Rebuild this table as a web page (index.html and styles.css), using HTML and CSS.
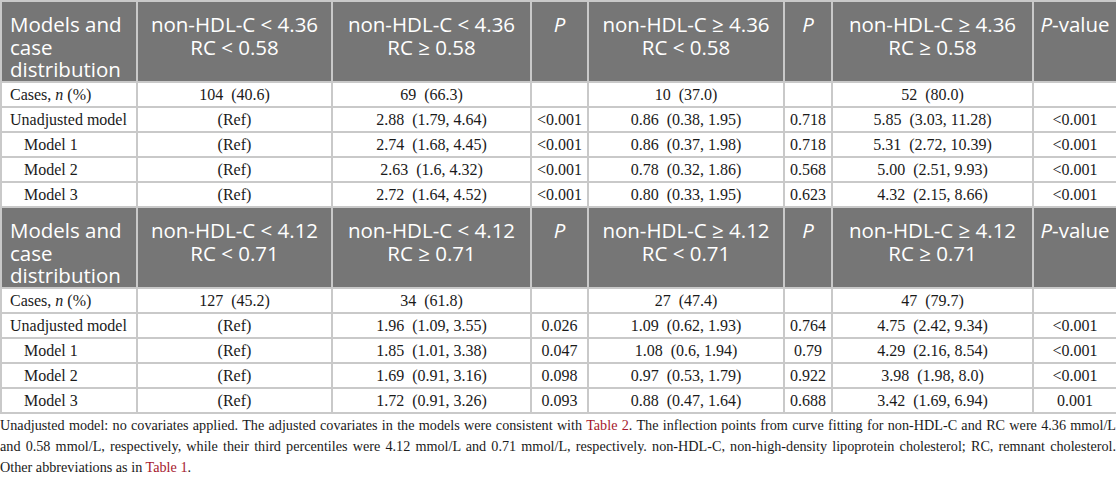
FILE: index.html
```html
<!DOCTYPE html>
<html lang="en">
<head>
<meta charset="utf-8">
<title>Table</title>
<link rel="stylesheet" href="styles.css">
</head>
<body>
<table class="data">
  <colgroup>
    <col class="c1"><col class="c2"><col class="c3"><col class="c4"><col class="c5"><col class="c6"><col class="c7"><col class="c8">
  </colgroup>
  <tbody>
    <tr class="head">
      <th class="first">Models and case distribution</th>
      <th>non-HDL-C &lt; 4.36<br>RC &lt; 0.58</th>
      <th>non-HDL-C &lt; 4.36<br>RC ≥ 0.58</th>
      <th><i>P</i></th>
      <th>non-HDL-C ≥ 4.36<br>RC &lt; 0.58</th>
      <th><i>P</i></th>
      <th>non-HDL-C ≥ 4.36<br>RC ≥ 0.58</th>
      <th><i>P</i>-value</th>
    </tr>
    <tr><td class="label">Cases, <i>n</i> (%)</td><td>104&ensp;(40.6)</td><td>69&ensp;(66.3)</td><td></td><td>10&ensp;(37.0)</td><td></td><td>52&ensp;(80.0)</td><td></td></tr>
    <tr><td class="label">Unadjusted model</td><td>(Ref)</td><td>2.88&ensp;(1.79, 4.64)</td><td>&lt;0.001</td><td>0.86&ensp;(0.38, 1.95)</td><td>0.718</td><td>5.85&ensp;(3.03, 11.28)</td><td>&lt;0.001</td></tr>
    <tr><td class="label sub">Model 1</td><td>(Ref)</td><td>2.74&ensp;(1.68, 4.45)</td><td>&lt;0.001</td><td>0.86&ensp;(0.37, 1.98)</td><td>0.718</td><td>5.31&ensp;(2.72, 10.39)</td><td>&lt;0.001</td></tr>
    <tr><td class="label sub">Model 2</td><td>(Ref)</td><td>2.63&ensp;(1.6, 4.32)</td><td>&lt;0.001</td><td>0.78&ensp;(0.32, 1.86)</td><td>0.568</td><td>5.00&ensp;(2.51, 9.93)</td><td>&lt;0.001</td></tr>
    <tr><td class="label sub">Model 3</td><td>(Ref)</td><td>2.72&ensp;(1.64, 4.52)</td><td>&lt;0.001</td><td>0.80&ensp;(0.33, 1.95)</td><td>0.623</td><td>4.32&ensp;(2.15, 8.66)</td><td>&lt;0.001</td></tr>
    <tr class="head">
      <th class="first">Models and case distribution</th>
      <th>non-HDL-C &lt; 4.12<br>RC &lt; 0.71</th>
      <th>non-HDL-C &lt; 4.12<br>RC ≥ 0.71</th>
      <th><i>P</i></th>
      <th>non-HDL-C ≥ 4.12<br>RC &lt; 0.71</th>
      <th><i>P</i></th>
      <th>non-HDL-C ≥ 4.12<br>RC ≥ 0.71</th>
      <th><i>P</i>-value</th>
    </tr>
    <tr><td class="label">Cases, <i>n</i> (%)</td><td>127&ensp;(45.2)</td><td>34&ensp;(61.8)</td><td></td><td>27&ensp;(47.4)</td><td></td><td>47&ensp;(79.7)</td><td></td></tr>
    <tr><td class="label">Unadjusted model</td><td>(Ref)</td><td>1.96&ensp;(1.09, 3.55)</td><td>0.026</td><td>1.09&ensp;(0.62, 1.93)</td><td>0.764</td><td>4.75&ensp;(2.42, 9.34)</td><td>&lt;0.001</td></tr>
    <tr><td class="label sub">Model 1</td><td>(Ref)</td><td>1.85&ensp;(1.01, 3.38)</td><td>0.047</td><td>1.08&ensp;(0.6, 1.94)</td><td>0.79</td><td>4.29&ensp;(2.16, 8.54)</td><td>&lt;0.001</td></tr>
    <tr><td class="label sub">Model 2</td><td>(Ref)</td><td>1.69&ensp;(0.91, 3.16)</td><td>0.098</td><td>0.97&ensp;(0.53, 1.79)</td><td>0.922</td><td>3.98&ensp;(1.98, 8.0)</td><td>&lt;0.001</td></tr>
    <tr><td class="label sub">Model 3</td><td>(Ref)</td><td>1.72&ensp;(0.91, 3.26)</td><td>0.093</td><td>0.88&ensp;(0.47, 1.64)</td><td>0.688</td><td>3.42&ensp;(1.69, 6.94)</td><td>0.001</td></tr>
  </tbody>
</table>
<p class="note">Unadjusted model: no covariates applied. The adjusted covariates in the models were consistent with <a class="ref" href="#">Table 2</a>. The inflection points from curve fitting for non-HDL-C and RC were 4.36 mmol/L and 0.58 mmol/L, respectively, while their third percentiles were 4.12 mmol/L and 0.71 mmol/L, respectively. non-HDL-C, non-high-density lipoprotein cholesterol; RC, remnant cholesterol. Other abbreviations as in <a class="ref" href="#">Table 1</a>.</p>
</body>
</html>
```

FILE: styles.css
```css
html, body {
  margin: 0;
  padding: 0;
  background: #ffffff;
}
body {
  width: 1116px;
  font-family: "Liberation Serif", "Times New Roman", serif;
  color: #1a1a1a;
}
.data {
  width: 1116px;
  border-collapse: collapse;
  table-layout: fixed;
}
.c1 { width: 136px; }
.c2 { width: 195px; }
.c3 { width: 199px; }
.c4 { width: 57px; }
.c5 { width: 196px; }
.c6 { width: 48px; }
.c7 { width: 201px; }
.c8 { width: 84px; }
.data th, .data td {
  border: 2px solid #c9c9c9;
}
.head th {
  background: #767676;
  color: #ffffff;
  font-family: "Open Sans", "Noto Sans", sans-serif;
  font-weight: 400;
  font-size: 20.5px;
  line-height: 22.5px;
  text-align: center;
  vertical-align: top;
  padding: 11px 4px 0 4px;
  height: 68px;
}
.head th.first {
  text-align: left;
  padding-left: 8px;
}
.data td {
  font-size: 16px;
  line-height: 23px;
  padding: 0 3px;
  text-align: center;
  white-space: nowrap;
}
.data td.label {
  text-align: left;
  padding-left: 8px;
}
.data td.sub {
  padding-left: 22px;
}
.note {
  margin: 1px 0 0 0;
  font-size: 14.2px;
  line-height: 21px;
  text-align: justify;
  color: #1a1a1a;
}
.ref {
  color: #a6192e;
  text-decoration: none;
}
```
